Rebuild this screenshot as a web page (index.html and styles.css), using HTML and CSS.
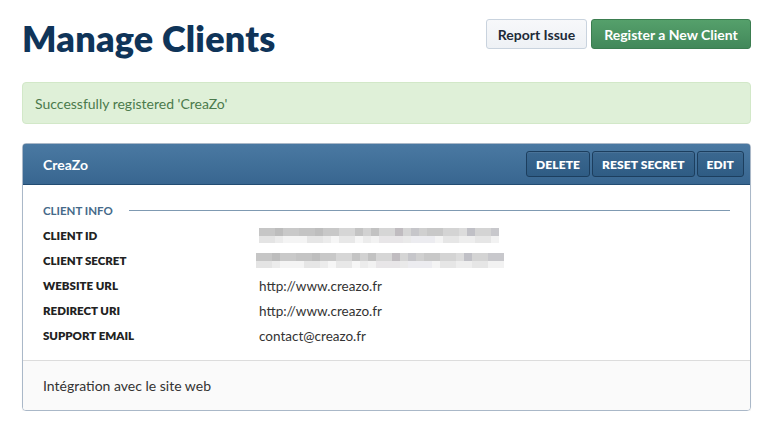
FILE: index.html
```html
<!DOCTYPE html>
<html lang="en">
<head>
<meta charset="utf-8">
<title>Manage Clients</title>
<link rel="stylesheet" href="styles.css">
</head>
<body>
<div class="page">
  <header class="page-head">
    <h1 class="title">Manage Clients</h1>
    <div class="actions">
      <button class="btn btn-light">Report Issue</button>
      <button class="btn btn-green">Register a New Client</button>
    </div>
  </header>

  <div class="alert">Successfully registered 'CreaZo'</div>

  <section class="panel">
    <div class="panel-head">
      <h2 class="panel-title">CreaZo</h2>
      <div class="panel-actions">
        <button class="pbtn">DELETE</button>
        <button class="pbtn">RESET SECRET</button>
        <button class="pbtn">EDIT</button>
      </div>
    </div>
    <div class="panel-body">
      <div class="section-title"><span>CLIENT INFO</span><i class="rule"></i></div>
      <dl class="info">
        <dt>CLIENT ID</dt>
        <dd><div class="blur blur-id"><div class="b-top"></div><div class="b-bot"></div></div></dd>
        <dt>CLIENT SECRET</dt>
        <dd><div class="blur blur-secret"><div class="b-top"></div><div class="b-bot"></div></div></dd>
        <dt>WEBSITE URL</dt>
        <dd>http://www.creazo.fr</dd>
        <dt>REDIRECT URI</dt>
        <dd>http://www.creazo.fr</dd>
        <dt>SUPPORT EMAIL</dt>
        <dd>contact@creazo.fr</dd>
      </dl>
    </div>
    <div class="panel-foot">Intégration avec le site web</div>
  </section>
</div>
</body>
</html>
```

FILE: styles.css
```css
* { box-sizing: border-box; }
html, body { margin: 0; padding: 0; background: #fff; }
body {
  font-family: "Lato", "Open Sans", "Liberation Sans", sans-serif;
  color: #333;
}
.page { padding: 16px 16px 0 22px; width: 767px; }
.page-head {
  display: flex;
  justify-content: space-between;
  align-items: flex-start;
  height: 66px;
}
.title {
  margin: 0;
  font-size: 36px;
  line-height: 44px;
  font-weight: 800;
  color: #0f3459;
  letter-spacing: 0.2px;
}
.actions { display: flex; gap: 4px; margin-top: 3px; }
.btn {
  height: 30px;
  border-radius: 3px;
  font-family: inherit;
  font-size: 14px;
  font-weight: 700;
  padding: 0 6px;
  cursor: pointer;
}
.btn-light {
  width: 101px;
  background: linear-gradient(#f7f8fa, #eef1f5);
  border: 1px solid #c9d3de;
  color: #1e2b38;
}
.btn-green {
  width: 160px;
  background: linear-gradient(#55a06b, #42885a);
  border: 1px solid #3b7d50;
  color: #fff;
}
.alert {
  height: 42px;
  width: 729px;
  background: #dff0d8;
  border: 1px solid #d2e8c8;
  border-radius: 4px;
  color: #4b7a4c;
  font-size: 14px;
  padding: 0 12px;
  display: flex;
  align-items: center;
}
.panel {
  width: 729px;
  margin-top: 19px;
  border: 1px solid #aab8c8;
  border-radius: 4px;
  box-shadow: 0 1px 1px rgba(0,0,0,0.08);
  overflow: hidden;
}
.panel-head {
  height: 42px;
  margin: -1px -1px 0;
  background: linear-gradient(#4a79a2, #386690);
  border: 1px solid #224c72;
  border-radius: 4px 4px 0 0;
  display: flex;
  align-items: center;
  justify-content: space-between;
  padding: 0 6px 0 20px;
}
.panel-title {
  margin: 0;
  font-size: 14px;
  font-weight: 700;
  color: #fff;
}
.panel-actions { display: flex; gap: 2px; }
.pbtn {
  height: 26px;
  padding: 0 9px;
  background: linear-gradient(#3b6890, #2f5c84);
  border: 1px solid #1c3e5e;
  border-radius: 3px;
  color: #fff;
  font-family: inherit;
  font-weight: 800;
  font-size: 12px;
  letter-spacing: 0.1px;
  box-shadow: inset 0 1px 0 rgba(255,255,255,0.08);
}
.panel-body { padding: 13px 20px 12px 20px; }
.section-title {
  display: flex;
  align-items: center;
  height: 25px;
  font-size: 11.5px;
  font-weight: 700;
  color: #456989;
}
.rule { flex: 1; height: 1px; background: #7f9ab2; margin-left: 16px; }
.info {
  display: grid;
  grid-template-columns: 216px 1fr;
  grid-auto-rows: 25px;
  margin: 0;
  align-items: center;
}
.info dt {
  font-size: 11.5px;
  font-weight: 800;
  color: #222;
}
.info dd {
  margin: 0;
  font-size: 13.5px;
  color: #333;
}
.blur { display: flex; flex-direction: column; }
.b-top, .b-bot { height: 8px; }
.b-bot { height: 7px; }
.blur-id { width: 240px; }
.blur-secret { width: 248px; margin-left: -3px; }
.b-top {
  background: linear-gradient(to right,
    #c6c6c6 0 16px, #bdbdbd 16px 24px, #c9c9c9 24px 40px, #c4c4c4 40px 56px,
    #bebebe 56px 64px, #c8c8c8 64px 80px, #d6d6d6 80px 96px, #c4c4c4 96px 104px,
    #d2d2d2 104px 112px, #c2c2c2 112px 120px, #d6d6d6 120px 136px, #c0bcc0 136px 144px,
    #d5d5d5 144px 152px, #c6c6ca 152px 160px, #d0d0d0 160px 168px, #c8c8c8 168px 184px,
    #d4d4d4 184px 200px, #dcdcdc 200px 208px, #c0c0c6 208px 216px, #d4d4d4 216px 232px,
    #c8c8cc 232px 248px);
}
.b-bot {
  background: linear-gradient(to right,
    #e4e4e4 0 16px, #ececec 16px 24px, #f4f4f4 24px 48px, #e6e6e6 48px 64px,
    #ececec 64px 72px, #f6f6f6 72px 80px, #e8e8e8 80px 96px, #f6f6f6 96px 104px,
    #ececec 104px 112px, #f2f2f2 112px 120px, #e8e6e8 120px 144px, #eaeaea 144px 152px,
    #ececf0 152px 176px, #f4f4f4 176px 184px, #e6e6e6 184px 200px, #eeeeee 200px 216px,
    #e6e6e6 216px 232px, #f2f2f2 232px 248px);
}
.panel-foot {
  height: 50px;
  border-top: 1px solid #dcdcdc;
  background: #fafafa;
  padding: 0 20px;
  display: flex;
  align-items: center;
  font-size: 14px;
  color: #333;
}
```
